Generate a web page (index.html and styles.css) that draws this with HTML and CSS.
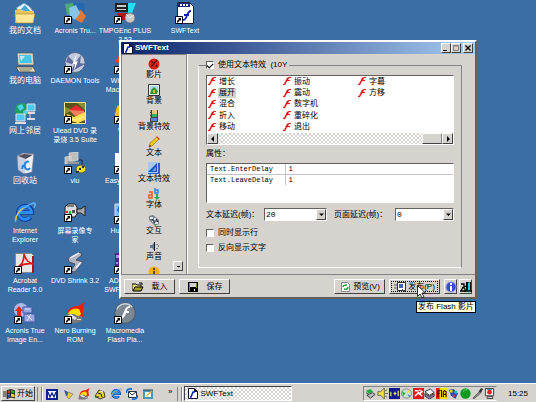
FILE: index.html
```html
<!DOCTYPE html>
<html lang="zh-CN">
<head>
<meta charset="UTF-8">
<meta name="viewport" content="width=device-width, initial-scale=1.0">
<title>SWFText</title>
<link rel="stylesheet" href="styles.css">
</head>
<body>
<!-- 公用图形 -->
<svg class="defs" aria-hidden="true">
  <symbol id="shortcut" viewBox="0 0 8 8"><path fill="#fff" stroke="#000" d="M.5.5h7v7h-7z"/><path d="M3 2h3v3L5 4 3 6.5H2V5l2-2z"/></symbol>
  <symbol id="flash" viewBox="0 0 8 9"><path d="M8 0v1H6L5 3h2v1H4L2 8H0V7h1l3-6 2-1z" fill="#e00000" stroke="#e66" stroke-width=".3"/></symbol>
  <symbol id="doc" viewBox="0 0 10 11"><path fill="#fff" stroke="#112" d="M.5.5h6l3 3v7h-9z"/><path fill="#112" d="M6 0l4 4H6z"/><path d="M2 9h1l2-5h2" fill="none" stroke="#1020c0" stroke-width="1.6"/></symbol>
  <symbol id="ie" viewBox="0 0 22 22"><path d="M16.500 15a6.800 6.800 0 1 1 1.500-4.500H6" fill="none" stroke="#0b3f9e" stroke-width="4.500"/><path d="M16 15a6.500 6.500 0 1 1 1.500-4.500H6" fill="none" stroke="#2c8cf0" stroke-width="2.800"/><path d="M2 20C-1 15 9 4 20 1c2 0 1 3 0 5" fill="none" stroke="#5cb4ff" stroke-width="1.500"/><path d="M2 18c0-5 3-9 7-12" fill="none" stroke="#e8c040" stroke-width="1.200"/></symbol>
  <symbol id="nero" viewBox="0 0 22 22"><path d="M3 12C4 5 10 4 14 4l7-4-2 6 1 8-6 3H3z" fill="#e82010"/><path d="M4 12c2-5 6-6 11-5l2 5-3 3H4z" fill="#ffe000"/><path d="M2 13q6-3 12 1h4v5l-5 2H1z" fill="#777"/><path d="M3 14l4-2 6 4-2 2zM13 17h4v1h-4z" fill="#ddd"/></symbol>
</svg>

<main class="desktop">
  <div class="icons">
    <a href="#" class="icon cjk">
      <svg viewBox="0 0 22 22"><path d="M2 6l8-5 5 3 5 6-8 5z" fill="#e8f4ff" stroke="#5a8fb8"/><path d="M6 8l5-5 6 7z" fill="#46a8d8"/><path d="M1 8l5-1 2 2h12v10l-2 2H1z" fill="#e8c458"/><path d="M1 12h20l-2 9H2z" fill="#fbe795" stroke="#a88828" stroke-width=".6"/></svg>
      <span>我的文档</span>
    </a>
    <a href="#" class="icon cjk">
      <svg viewBox="0 0 22 22"><path d="M3 1h16l1 12H4z" fill="#d8d4c4" stroke="#555" stroke-width=".7"/><path d="M5 3h12l1 8H6z" fill="#48c4f0"/><path d="M6 4h5l-4 5z" fill="#bff0ff"/><path d="M2 15h17l3 5H5z" fill="#e0d8c0" stroke="#443" stroke-width=".7"/><path d="M5 17h13M6 19h10" stroke="#776"/></svg>
      <span>我的电脑</span>
    </a>
    <a href="#" class="icon cjk">
      <svg viewBox="0 0 22 22"><circle cx="8" cy="8" r="7" fill="#18a060"/><path d="M3 4l5-2 2 4-4 3zM9 9l5-2v4l-4 3z" fill="#50d0e8"/><path d="M13 2h8v7h-8zM2 12h9v7H2z" fill="#50c8f8" stroke="#ddd"/><path d="M14 10h7v2h-7zM13 16h8v2h-8zM1 20h11v2H1z" fill="#ddd"/><path d="M16 12v4" stroke="#ddd"/></svg>
      <span>网上邻居</span>
    </a>
    <a href="#" class="icon cjk">
      <svg viewBox="0 0 22 22"><path d="M3 4l6-3 11 1-2 18-8 2-6-4z" fill="#c9cfe0" stroke="#778" stroke-width=".7"/><path d="M4 4l6-2 9 1-7 4z" fill="#554c5c"/><path d="M12 7l7-4-2 17-6 1z" fill="#f0f2ff"/><path d="M15 10a3 4 0 1 0 1 6M9 13l-1 4" fill="none" stroke="#2484e0" stroke-width="2"/></svg>
      <span>回收站</span>
    </a>
    <a href="#" class="icon">
      <svg viewBox="0 0 22 22"><use href="#ie"/></svg>
      <span>Internet<br>Explorer</span>
    </a>
    <a href="#" class="icon">
      <svg viewBox="0 0 22 22"><path fill="#e6e6e6" stroke="#888" d="M1.500 1.500h16l2 2v17h-18z"/><path d="M18 4h2v17h-2z" fill="#b81010"/><path d="M4 15c4-2 6-7 6-13 2 7 5 9 10 10-6-1-11 0-16 3z" fill="none" stroke="#d81818" stroke-width="1.600"/><use href="#shortcut" y="14" width="8" height="8"/></svg>
      <span>Acrobat<br>Reader 5.0</span>
    </a>
    <a href="#" class="icon">
      <svg viewBox="0 0 22 22"><circle cx="7" cy="8" r="7" fill="#a8b8e8"/><path d="M9 5h9v6H9zM10 12h11v8H10z" fill="#96a4e0" stroke="#445aa8"/><path d="M13 13l5 5M17 12l-4 7M11 7h5" stroke="#dce4ff"/><path d="M3 14V9H1l4-5 4 5H7v5z" fill="#e02810"/><use href="#shortcut" y="14" width="8" height="8"/></svg>
      <span>Acronis True<br>Image En...</span>
    </a>

    <a href="#" class="icon">
      <svg viewBox="0 0 22 22"><path d="M1 2l8-1 3 4-2 8H3z" fill="#50a878"/><path d="M9 1h10l2 3v8l-9-1z" fill="#2468b0"/><path d="M11 10l6-2 5 6-4 7-6-3z" fill="#e07838"/><path d="M5 6l7-3 4 8-5 7-5-4z" fill="#88c4e8"/><use href="#shortcut" y="14" width="8" height="8"/></svg>
      <span>Acronis Tru...</span>
    </a>
    <a href="#" class="icon">
      <svg viewBox="0 0 22 22"><circle cx="11" cy="10.500" r="10" fill="#c2cade" stroke="#59658a"/><path d="M4 4l7 7 6-8-1 8 5 1-9 5-5 3 3-7-8-3z" fill="#5d6c9c"/><path d="M13 1l-2 9 3-1-4 10 1-7-3 1z" fill="#fff"/><use href="#shortcut" y="14" width="8" height="8"/></svg>
      <span>DAEMON Tools</span>
    </a>
    <a href="#" class="icon">
      <svg viewBox="0 0 22 22"><path fill="#55551a" stroke="#f4e890" d="M.5.5h21v21H.5z"/><path d="M1 5l8 3-8 4zM13 1h8v7z" fill="#8a9030"/><path d="M5 8l7-5 9 6-8 3z" fill="#e82c2c"/><path d="M5 8l15 1v3l-9 2z" fill="#f08060"/><path d="M3 12l7 3 11-5v8l-7 3-10-3z" fill="#ffe050"/><path d="M5 16l7 2 8-3" fill="none" stroke="#fff2a0"/><use href="#shortcut" y="14" width="8" height="8"/></svg>
      <span>Ulead DVD 录<br>录烧 3.5 Suite</span>
    </a>
    <a href="#" class="icon">
      <svg viewBox="0 0 22 22"><path d="M5 1l9-1v8l-8 2zM1 5l6-1v7l-6 1z" fill="#bcbcbc" stroke="#eee" stroke-width=".6"/><path d="M4 9l11 1v2L3 12z" fill="#999"/><path d="M15 8h3v5" fill="none" stroke="#223"/><ellipse cx="17" cy="17" rx="5" ry="4" fill="#e8e020" stroke="#554"/><path d="M15 16h2v2h-2zM18 14h2v2h-2zM12 19h3v2h-3z" fill="#333"/><use href="#shortcut" y="14" width="8" height="8"/></svg>
      <span>viu</span>
    </a>
    <a href="#" class="icon">
      <svg viewBox="0 0 22 22"><path d="M1 5l3-3h7l2 3v7l-2 3H1z" fill="#ddd" stroke="#222"/><path d="M3 4h7M13 7h4l4-3v10l-4-3h-4z" fill="#aaa" stroke="#222"/><path d="M2 9h2v2H2z" fill="#e02020"/><path d="M5 9h2v3H5z" fill="#10b040"/><path d="M8 8h3v3H8z" fill="#555"/><use href="#shortcut" y="12" width="8" height="8"/></svg>
      <span>屏幕录像专<br>家</span>
    </a>
    <a href="#" class="icon">
      <svg viewBox="0 0 22 22"><path d="M4 6l12-6 2 3-6 5 7 2-8 10-4-1 4-7-6-2z" fill="#aeb4c4" stroke="#4a5060"/><path d="M6 6l9-5M12 16l5-6" stroke="#eef" stroke-width="1.500"/><use href="#shortcut" y="14" width="8" height="8"/></svg>
      <span>DVD Shrink 3.2</span>
    </a>
    <a href="#" class="icon">
      <svg viewBox="0 0 22 22"><use href="#nero"/><use href="#shortcut" y="14" width="8" height="8"/></svg>
      <span>Nero Burning<br>ROM</span>
    </a>

    <a href="#" class="icon">
      <svg viewBox="0 0 22 22"><path d="M12 1h10l-4 10h-4z" fill="#20e0f0"/><path d="M1 1h13v9H1z" fill="#222"/><path d="M3 3h9v2H3zM3 7h9v1H3z" fill="#ccc"/><path d="M3 11h10v7H5z" fill="#b01818"/><circle cx="16" cy="16" r="5" fill="#c8c8c8" stroke="#666" stroke-width=".7"/><path d="M12 12l4 4 4-3" stroke="#eee" fill="none"/><use href="#shortcut" y="14" width="8" height="8"/></svg>
      <span>TMPGEnc PLUS<br>2.53</span>
    </a>
    <a href="#" class="icon">
      <svg viewBox="0 0 22 22"><path d="M1 10l4-7 6-1v10z" fill="#e84818"/><path d="M11 3h9v16h-9z" fill="#3878d8"/><use href="#shortcut" y="14" width="8" height="8"/></svg>
      <span>Windows<br>Macromedia</span>
    </a>
    <a href="#" class="icon">
      <svg viewBox="0 0 22 22"><path d="M3 4l6-2 10 5v13H1v-8z" fill="#f0bc28"/><use href="#shortcut" y="14" width="8" height="8"/></svg>
      <span>Wi...</span>
    </a>
    <a href="#" class="icon tucked">
      <svg viewBox="0 0 22 22"><path d="M1 1h20v20H1z" fill="#fff"/><use href="#shortcut" y="14" width="8" height="8"/></svg>
      <span>Easy</span>
    </a>
    <a href="#" class="icon">
      <svg viewBox="0 0 22 22"><path d="M1 2h20v18H1z" fill="#80c0f0" stroke="#dde"/><path d="M3 8l2-4 3 12z" fill="#2868b8"/><use href="#shortcut" y="14" width="8" height="8"/></svg>
      <span>HuaYuan</span>
    </a>
    <a href="#" class="icon">
      <svg viewBox="0 0 22 22"><path d="M1 1h20v20H1z" fill="#50248c"/><path d="M2 3h3v3H2zM2 10h2v2H2z" fill="#b090e0"/><use href="#shortcut" y="14" width="8" height="8"/></svg>
      <span>ADShareit<br>SWF Toolbox</span>
    </a>
    <a href="#" class="icon">
      <svg viewBox="0 0 22 22"><circle cx="11" cy="11" r="10.300" fill="#7c8794" stroke="#4c5866"/><path d="M3 7a9 9 0 0 1 15-2" fill="none" stroke="#c8d0d8" stroke-width="1.500"/><path d="M16 4v2c-3 0-3 2-3 3h2v2h-3c-1 4-3 6-6 6v-2c5-1 3-11 10-11z" fill="#fff"/><use href="#shortcut" y="14" width="8" height="8"/></svg>
      <span>Macromedia<br>Flash Pla...</span>
    </a>

    <a href="#" class="icon">
      <svg viewBox="0 0 22 22"><path fill="#fff" stroke="#202030" d="M3.500.5h12l4 4v17h-16z"/><path d="M4 1h12v4H4z" fill="#182878"/><path d="M6 2h2v2H6zM9 2h2v2H9zM12 2h2v2h-2z" fill="#fff"/><path d="M17 9c-5 0-3 9-8 9M10 13h5" fill="none" stroke="#1020b8" stroke-width="1.800"/><use href="#shortcut" x="1" y="14" width="8" height="8"/></svg>
      <span>SWFText</span>
    </a>
  </div>

  <section class="window">
    <header class="titlebar">
      <svg class="app-icon" viewBox="0 0 10 11"><use href="#doc"/></svg>
      <h1>SWFText</h1>
      <button class="caption" aria-label="最小化"><svg viewBox="0 0 8 8"><path d="M1 6h4v1H1z"/></svg></button>
      <button class="caption" aria-label="最大化"><svg viewBox="0 0 8 8"><path d="M1.500 1.500h5v5h-5zM1 2h6" fill="none" stroke="#848284"/></svg></button>
      <button class="caption close" aria-label="关闭"><svg viewBox="0 0 8 8"><path d="M1.500 1.500l5 5M6.500 1.500l-5 5" stroke="#000" stroke-width="1.300"/></svg></button>
    </header>

    <div class="body">
      <nav class="sidebar">
        <a href="#"><svg viewBox="0 0 12 12"><circle cx="6" cy="6" r="5.500" fill="#d82018"/><path d="M3 3l2 2M9 2L3 9M8 7l1 2" stroke="#611" stroke-width="1.500"/></svg>影片</a>
        <a href="#"><svg viewBox="0 0 12 12"><path d="M.5.5h11v11H.5z" fill="#e8f4e8" stroke="#334"/><path d="M2 2h8v4H2z" fill="#a8d8f0"/><path d="M2 10l1-4 3-3 4 4-1 3z" fill="#3c9028"/><path d="M5 6h2v3H5z" fill="#e8c020"/></svg>背景</a>
        <a href="#"><svg viewBox="0 0 12 12"><path d="M2 0h8v12H2z" fill="#444"/><path d="M4 0h5v4H4z" fill="#f0c080"/><path d="M4 4h5v3H4z" fill="#30b060"/><path d="M3 8h6v3H3z" fill="#6080e0"/><path d="M2 1h1M2 4h1M2 7h1" stroke="#fff"/></svg>背景特效</a>
        <a href="#"><svg viewBox="0 0 12 12"><path d="M1 11l1-4 7-6 2 2-7 7z" fill="#f8c818" stroke="#a07008" stroke-width=".7"/><path d="M8 1l1-1 3 3-1 1z" fill="#e05030"/><path d="M1 11l1-2 1 1z"/></svg>文本</a>
        <a href="#"><svg viewBox="0 0 12 12"><path d="M0 0h12v12H0z" fill="#a8c8f0"/><path d="M0 10l9-9v9z" fill="#2050b8"/><path d="M10 1h2v11H0v-1h10z" fill="#3060c0"/><path d="M4 9l4-4v4z" fill="#70a0e8"/></svg>文本特效</a>
        <a href="#"><svg viewBox="0 0 12 12"><path d="M1 4h3v6H1V7h3" fill="none" stroke="#f06030" stroke-width="1.600"/><path d="M7 0v5h3V2H7" fill="none" stroke="#3080e0" stroke-width="1.400"/><path d="M8 6h2v3h2l-3 3-3-3h2z" fill="#30a848"/></svg>字体</a>
        <a href="#"><svg viewBox="0 0 12 12"><path d="M1 2l4-1 6 5v4l-4 2-6-6z" fill="#758090"/><path d="M2 3h3v2H2zM6 4h2v2H6zM7 8h3v2H7zM4 7h2v1H4z" fill="#e0e8f0"/><path d="M4 5l3 4M8 5l2 3" stroke="#222"/></svg>交互</a>
        <a href="#"><svg viewBox="0 0 12 12"><path d="M2 5h2l3-3v9L4 8H2z" fill="#607890"/><path d="M6 2h1v9H6z" fill="#112"/><path d="M9 4v1M9 8v1M10 6h1" stroke="#345"/></svg>声音</a>
        <a href="#" aria-label="关于"><svg viewBox="0 0 12 12"><circle cx="6" cy="6" r="5.500" fill="#f0b018"/><path d="M5 2h2v2H5zM5 5h2v5H5z" fill="#644"/></svg></a>
        <button class="scroll-down" aria-label="向下"><svg viewBox="0 0 8 8"><path d="M3 4h3v1H3z"/></svg></button>
      </nav>

      <div class="main">
        <fieldset class="group">
          <legend><label class="check"><input type="checkbox" checked>使用文本特效&nbsp; (10Y</label></legend>

          <div class="list">
            <ul class="effects">
              <li><svg viewBox="0 0 8 9"><use href="#flash"/></svg><span>增长</span></li>
              <li><svg viewBox="0 0 8 9"><use href="#flash"/></svg><span class="selected">展开</span></li>
              <li><svg viewBox="0 0 8 9"><use href="#flash"/></svg><span>混合</span></li>
              <li><svg viewBox="0 0 8 9"><use href="#flash"/></svg><span>折入</span></li>
              <li><svg viewBox="0 0 8 9"><use href="#flash"/></svg><span>移动</span></li>
              <li><svg viewBox="0 0 8 9"><use href="#flash"/></svg><span>振动</span></li>
              <li><svg viewBox="0 0 8 9"><use href="#flash"/></svg><span>震动</span></li>
              <li><svg viewBox="0 0 8 9"><use href="#flash"/></svg><span>数字机</span></li>
              <li><svg viewBox="0 0 8 9"><use href="#flash"/></svg><span>重碎化</span></li>
              <li><svg viewBox="0 0 8 9"><use href="#flash"/></svg><span>退出</span></li>
              <li><svg viewBox="0 0 8 9"><use href="#flash"/></svg><span>字幕</span></li>
              <li><svg viewBox="0 0 8 9"><use href="#flash"/></svg><span>方移</span></li>
            </ul>
            <div class="scrollbar">
              <button aria-label="向左"><svg viewBox="0 0 8 8"><path d="M5 1v6L2 4z"/></svg></button>
              <span class="thumb"></span>
              <button aria-label="向右"><svg viewBox="0 0 8 8"><path d="M3 1v6l3-3z"/></svg></button>
            </div>
          </div>

          <p class="caption-text">属性：</p>
          <div class="props">
            <table>
              <tr><th>Text.EnterDelay</th><td>1</td></tr>
              <tr><th>Text.LeaveDelay</th><td>1</td></tr>
            </table>
          </div>

          <div class="delays">
            <label for="text-delay">文本延迟(帧)：</label>
            <span class="combo text-combo"><select id="text-delay"><option>20</option></select><svg viewBox="0 0 8 8"><path d="M2 3h5L4.500 5.500z"/></svg></span>
            <label for="page-delay" class="second">页面延迟(帧)：</label>
            <span class="combo page-combo"><select id="page-delay"><option>0</option></select><svg viewBox="0 0 8 8"><path d="M2 3h5L4.500 5.500z"/></svg></span>
          </div>
          <div class="checks">
            <label class="check"><input type="checkbox">同时显示行</label>
            <label class="check"><input type="checkbox">反向显示文字</label>
          </div>
        </fieldset>
      </div>
    </div>

    <footer class="actions">
      <button><svg viewBox="0 0 12 10"><path d="M0 9V2h4l1 1h4v2" fill="#f0e880" stroke="#000"/><path d="M1 9l2-4h8L9 9z" fill="#a8a020" stroke="#000"/><path d="M7 1h3v2" fill="none" stroke="#000"/></svg><span>载入</span></button>
      <button><svg viewBox="0 0 12 10"><path d="M1 0h10v10H1z"/><path d="M3 1h6v4H3z" fill="#d6d3ce"/><path d="M2 1h1v8H2zM9 1h1v5H9z" fill="#808020"/><path d="M7 7h1v2H7z" fill="#fff"/></svg><span>保存</span></button>
      <button class="push compact"><svg viewBox="0 0 12 10"><path fill="#fff" stroke="#888" d="M2.500.5h6l2 2v7h-8z"/><path d="M4 5q0-2 4-2M9 5q0 3-4 2" fill="none" stroke="#28a038" stroke-width="1.500"/></svg><span>预览(V)</span></button>
      <button class="compact focused"><svg viewBox="0 0 12 10"><path fill="#fff" stroke="#333" d="M3.500.5h8v8h-8z"/><path d="M5 2h4v4H5z" fill="#4060c0"/><path d="M0 3h3M0 6h3M8 7l3 3" stroke="#555"/></svg><span>发布(P)</span></button>
      <button class="square" aria-label="帮助"><svg viewBox="0 0 12 12"><circle cx="6" cy="6" r="5" fill="#3848d8" stroke="#9098e0"/><path d="M5 2h2v2H5zM5 5h2v5H5z" fill="#fff"/></svg></button>
      <button class="square" aria-label="退出"><svg viewBox="0 0 12 12"><path d="M6 1h5v9H6z"/><path d="M8 2l2-1v9l-2 2z" fill="#00d8e8"/><path d="M1 3h3v3l2-1M3 6l2 2v3M3 6l-2 4M0 10h12" stroke="#000" fill="none" stroke-width="1.300"/></svg></button>
    </footer>
  </section>

  <div class="tooltip">发布 Flash 影片</div>
  <svg class="cursor" viewBox="0 0 9 14"><path d="M.5.5v11L3 9l2 4 2-1-2-4h3.500z" fill="#fff" stroke="#000" stroke-width=".8"/></svg>
</main>

<footer class="taskbar">
  <button class="start"><svg viewBox="0 0 12 10"><path d="M4 2l3-1v3L4 5z" fill="#e83020"/><path d="M8 1l4 1v3L8 4z" fill="#28a838"/><path d="M4 6l3-1v3L4 9z" fill="#2848d8"/><path d="M8 5l4 1v3L8 8z" fill="#f0d020"/><path d="M0 3h3M0 5h3M0 7h3M4 1.500l4-1 4 1.500v7L8 8 4 9.500zM7.500 1v7M4 5l4-1 4 1" fill="none" stroke="#000" stroke-width=".8"/></svg><span>开始</span></button>
  <span class="grip"></span>
  <nav class="quick">
    <a href="#" aria-label="Word"><svg viewBox="0 0 12 12"><path d="M0 1h12v11H0z" fill="#102090"/><path d="M2 3h8v7H2z" fill="#fff"/><path d="M2 4l2 5 2-4 2 4 2-5" fill="none" stroke="#102090" stroke-width="1.300"/></svg></a>
    <a href="#" aria-label="清理"><svg viewBox="0 0 12 12"><path d="M2 2l4 2 1 3-3 1z" fill="#3858a0"/><path d="M6 4l5 2-4 5-2-2z" fill="#e8d030" stroke="#665" stroke-width=".6"/></svg></a>
    <a href="#" aria-label="Nero"><svg viewBox="0 0 22 22"><use href="#nero"/></svg></a>
    <a href="#" aria-label="播放器"><svg viewBox="0 0 12 12"><path d="M1 8l4-6 5 2 1 5-5 2z" fill="#e0cc30" stroke="#443"/><path d="M4 5l3 1 1 3M1 9h4" stroke="#222" fill="none"/><path d="M6 3l3 1" stroke="#fff"/></svg></a>
    <a href="#" aria-label="Internet Explorer"><svg viewBox="0 0 22 22"><use href="#ie"/></svg></a>
    <a href="#" aria-label="Outlook Express"><svg viewBox="0 0 12 12"><path fill="#fff" stroke="#234" d="M2.500 3.500h8v6h-8z"/><path d="M3 4l3 3 4-3" stroke="#234" fill="none"/><path d="M0 5q1-5 6-4M12 7q-1 5-6 4" fill="none" stroke="#2070e0" stroke-width="1.800"/></svg></a>
    <a href="#" aria-label="显示桌面"><svg viewBox="0 0 12 12"><path d="M1 2h10v9H1z" fill="#4898b8"/><path d="M3 4h6v5H3z" fill="#fff"/><path d="M4 8l6-7 1 1-6 7z" fill="#e0b030"/><path d="M1 2h10" stroke="#345"/></svg></a>
  </nav>
  <span class="more">»</span>
  <span class="grip"></span>
  <button class="task"><svg viewBox="0 0 10 11"><use href="#doc"/></svg><span>SWFText</span></button>
  <div class="tray">
    <svg viewBox="0 0 12 12"><path d="M1 3l5-2 3 3-5 2z" fill="#20b040"/><path d="M2 8l6-3 3 2-5 4z" fill="#bbb" stroke="#333"/><path d="M1 5l3 2" stroke="#333"/></svg>
    <svg viewBox="0 0 12 12"><path d="M1 4h3l4-4v12L4 8H1z" fill="#f0e040" stroke="#443" stroke-width=".8"/><path d="M9 3l2-1M9 6h3M9 9l2 1" stroke="#555"/></svg>
    <svg viewBox="0 0 12 12"><path d="M0 0h12v12H0z" fill="#101890"/><path d="M2 4v5M5 6h3M6.500 4v4M10 3v6" stroke="#e8f060" stroke-width="1.300"/></svg>
    <svg viewBox="0 0 12 12"><ellipse cx="6" cy="6" rx="5.500" ry="5" fill="#c0e8d0" stroke="#888"/><path d="M1 3l4 3-3 3z" fill="#30b048"/><path d="M7 1l3 3-4 2z" fill="#f0e040"/><path d="M7 7l4 1-2 2z" fill="#6078e0"/></svg>
    <svg viewBox="0 0 12 12"><path d="M0 0h12v12H0z" fill="#e01818"/><path d="M2 3h4M2 9l4-4 4 4M7 2l3 2-4 3" fill="none" stroke="#fff" stroke-width="1.500"/></svg>
    <svg viewBox="0 0 12 12"><path d="M1 4l6-3 4 4-5 3z" fill="#eee" stroke="#333"/><path d="M1 6l5 3 5-3v3l-5 3-5-3z" fill="#8878a8" stroke="#333"/></svg>
    <svg viewBox="0 0 12 12"><path d="M0 0h12v12H0z" fill="#ffe800"/><path d="M0 0h4v12H0z" fill="#e82010"/><path d="M2 10V3h3M2 6h2M6 2v8M8 10V4l1-1 2 1v6M8 7h3" fill="none" stroke="#300" stroke-width="1.200"/></svg>
    <svg viewBox="0 0 12 12"><path d="M1 2l5-1 5 5-3 6-5-4z" fill="#2850b0"/><path d="M2 2h3v3H2z" fill="#e8c020"/><path d="M7 3h3v3H7z" fill="#30b8d0"/><path d="M5 7h3v3H5z" fill="#c03060"/></svg>
    <svg viewBox="0 0 12 12"><circle cx="6" cy="6" r="5.600" fill="#109820"/><path d="M3 4q2-3 5-2" stroke="#60e060" fill="none"/></svg>
    <svg viewBox="0 0 12 12"><path d="M1 11l7-7 2 1-8 7z" fill="#888" stroke="#333" stroke-width=".6"/><path d="M7 4l3-4 2 1-2 4z" fill="#333"/></svg>
    <svg viewBox="0 0 12 12"><path fill="#f4f4f4" stroke="#333" d="M1.500.5h9v8h-9zM3.500 9.500h6v2h-6z"/><circle cx="6" cy="4.500" r="2.500" fill="#e02020"/><path d="M3 1h6v1H3z" fill="#3080c0"/></svg>
  </div>
  <time class="clock">15:25</time>
</footer>
</body>
</html>
```
FILE: styles.css
```css
* {
  box-sizing: border-box;
}

body {
  margin: 0;
  min-height: 100vh;
  display: flex;
  flex-direction: column;
  overflow: hidden;
  background: #3a6ea5;
  color: #000;
  font: 8px/10px "Liberation Sans", "Noto Sans CJK SC", sans-serif;
  cursor: default;
}

a {
  color: inherit;
  text-decoration: none;
}

svg {
  display: block;
  flex: none;
}

button,
select,
input {
  margin: 0;
  font: inherit;
  color: inherit;
}

button {
  display: flex;
  align-items: center;
  justify-content: center;
  padding: 0;
  background: #d6d3ce;
  border: 1px solid;
  border-color: #fff #424142 #424142 #fff;
}

.defs {
  position: absolute;
  width: 0;
  height: 0;
}

/* 桌面图标 */
.desktop {
  position: relative;
  flex: 1;
}

.icons {
  display: grid;
  grid-template-columns: 50px 50px 50px 70px;
  grid-template-rows: repeat(7, 50px);
  grid-auto-flow: column;
  padding-top: 2px;
}

.icon {
  display: flex;
  flex-direction: column;
  align-items: center;
  gap: 2px;
  color: #fff;
  font-size: 7px;
  line-height: 9px;
  text-align: center;
  white-space: nowrap;
}

.icon svg {
  width: 22px;
  height: 22px;
}

.icon.cjk {
  font-size: 8px;
}

.icon.tucked span {
  align-self: flex-start;
  padding-left: 5px;
}

/* 主窗口 */
.window {
  position: absolute;
  top: 40px;
  left: 119px;
  right: 59px;
  background: #d6d3ce;
  border: 2px solid;
  border-color: #fff #63615e #63615e #fff;
}

.titlebar {
  display: flex;
  align-items: center;
  height: 12px;
  padding: 0 2px;
  background: linear-gradient(to right, #0a246a, #a6caf0);
  color: #fff;
}

.titlebar h1 {
  flex: 1;
  margin: 0 0 0 2px;
  font-size: 8px;
}

.app-icon {
  width: 10px;
  height: 11px;
}

.caption {
  width: 10px;
  height: 10px;
}

.caption svg {
  width: 8px;
  height: 8px;
}

.caption.close {
  margin-left: 2px;
}

.body {
  display: flex;
  height: 221px;
  border-bottom: 1px solid #848284;
}

.sidebar {
  position: relative;
  width: 66px;
  padding-top: 3px;
  overflow: hidden;
  border: 1px solid #848284;
  border-bottom: 0;
  box-shadow: 1px 0 #fff;
}

.sidebar a {
  display: flex;
  flex-direction: column;
  align-items: center;
  height: 26px;
  line-height: 10px;
}

.sidebar svg {
  width: 12px;
  height: 12px;
}

.scroll-down {
  position: absolute;
  right: 3px;
  bottom: 3px;
  width: 10px;
  height: 10px;
}

.scroll-down svg {
  width: 8px;
  height: 8px;
}

.main {
  flex: 1;
  padding: 6px 13px 6px 11px;
}

.group {
  min-width: 0;
  height: 100%;
  margin: 0;
  padding: 5px 7px 0;
  border: 1px solid;
  border-color: #848284 #848284 #fff #fff;
}

.group legend {
  padding: 0 2px 0 0;
}

.check {
  display: flex;
  align-items: center;
  gap: 4px;
}

.check input {
  appearance: none;
  display: grid;
  justify-content: center;
  width: 8px;
  height: 8px;
  background: #fff;
  border: 1px solid;
  border-color: #63615e #fff #fff #63615e;
}

.check input:checked::after {
  content: "";
  width: 5px;
  height: 3px;
  margin-top: 1px;
  border: solid #000;
  border-width: 0 0 1px 1px;
  transform: rotate(-45deg);
}

/* 特效列表 */
.list {
  background: #fff;
  border: 1px solid;
  border-color: #63615e #fff #fff #63615e;
}

.effects {
  display: grid;
  grid-template-columns: repeat(3, 75px);
  grid-template-rows: repeat(5, 1fr);
  grid-auto-flow: column;
  height: 57px;
  margin: 0;
  padding: 0;
  list-style: none;
}

.effects li {
  display: flex;
  align-items: center;
  gap: 2px;
  padding-left: 1px;
}

.effects svg {
  width: 8px;
  height: 9px;
}

.effects span {
  padding: 0 1px;
}

.effects .selected {
  background: #d6d3ce;
}

.scrollbar {
  display: flex;
  height: 11px;
  background: repeating-conic-gradient(#d6d3ce 0 25%, #fff 0 50%) 0 0 / 4px 4px;
}

.scrollbar button {
  width: 11px;
}

.scrollbar svg {
  width: 8px;
  height: 8px;
}

.thumb {
  width: 20px;
  margin-left: auto;
  background: #d6d3ce;
  border: 1px solid;
  border-color: #fff #848284 #424142 #fff;
}

.caption-text {
  margin: 4px 0 4px;
}

/* 属性表 */
.props {
  height: 40px;
  background: #fff;
  border: 1px solid;
  border-color: #63615e #fff #fff #63615e;
}

.props table {
  width: 100%;
  border-collapse: collapse;
  table-layout: fixed;
  font: 7px/10px "Liberation Mono", monospace;
}

.props th,
.props td {
  padding: 0 0 0 3px;
  font-weight: normal;
  text-align: left;
}

.props th {
  width: 78px;
  border-right: 1px solid #c6c3c6;
}

.props tr:first-child {
  border-bottom: 1px solid #c6c3c6;
}

/* 延迟设置 */
.delays {
  display: flex;
  align-items: center;
  margin-top: 5px;
  white-space: nowrap;
}

.delays label {
  width: 58px;
}

.delays .second {
  margin-left: 7px;
  width: 61px;
}

.combo {
  display: flex;
  height: 13px;
  background: #fff;
  border: 1px solid;
  border-color: #63615e #fff #fff #63615e;
}

.text-combo {
  flex: 63;
}

.page-combo {
  flex: 59;
}

.combo select {
  flex: 1;
  min-width: 0;
  padding: 0 1px;
  appearance: none;
  background: none;
  border: 0;
  font: 8px/8px "Liberation Mono", monospace;
}

.combo svg {
  width: 10px;
  height: 11px;
  background: #d6d3ce;
  border: 1px solid;
  border-color: #fff #424142 #424142 #fff;
  pointer-events: none;
}

.checks {
  display: flex;
  flex-direction: column;
  gap: 5px;
  margin-top: 7px;
}

/* 底部按钮 */
.actions {
  display: flex;
  height: 22px;
  gap: 4px;
  padding: 4px 3px 3px;
}

.actions button {
  width: 51px;
  height: 15px;
  gap: 8px;
}

.actions svg {
  width: 12px;
  height: 10px;
}

.actions .compact {
  gap: 2px;
}

.actions .push {
  margin-left: auto;
}

.actions .focused {
  outline: 1px dotted #000;
  outline-offset: -3px;
}

.actions .square {
  width: 13px;
}

.actions .square + .square {
  margin-left: -2px;
}

.actions .square svg {
  height: 12px;
}

.tooltip {
  position: absolute;
  top: 301px;
  left: 416px;
  padding: 0 1px;
  background: #ffffe1;
  border: 1px solid #000;
  white-space: nowrap;
}

.cursor {
  position: absolute;
  top: 285px;
  left: 417px;
  width: 9px;
  height: 14px;
}

/* 任务栏 */
.taskbar {
  display: flex;
  align-items: center;
  height: 19px;
  padding: 2px 2px 1px 1px;
  background: #d6d3ce;
  border-top: 1px solid #fff;
}

.start {
  width: 34px;
  height: 15px;
  gap: 2px;
}

.start svg {
  width: 12px;
  height: 10px;
}

.grip {
  width: 5px;
  height: 14px;
  margin-left: 2px;
  border: solid #848284;
  border-width: 0 1px;
  box-shadow: 1px 0 #fff;
}

.quick {
  display: flex;
  gap: 4px;
  margin-left: 4px;
}

.quick svg {
  width: 12px;
  height: 12px;
}

.more {
  margin: 0 3px 4px 14px;
}

.task {
  justify-content: flex-start;
  width: 108px;
  height: 15px;
  margin-left: 2px;
  padding-left: 3px;
  gap: 2px;
  background: repeating-conic-gradient(#d6d3ce 0 25%, #fff 0 50%) 0 0 / 4px 4px;
  border-color: #424142 #fff #fff #424142;
}

.task svg {
  width: 10px;
  height: 11px;
}

.tray {
  display: flex;
  align-items: center;
  justify-content: space-between;
  width: 134px;
  height: 15px;
  margin-left: auto;
  padding: 0 1px;
  border: 1px solid;
  border-color: #848284 #d6d3ce #fff #848284;
}

.tray svg {
  width: 11px;
  height: 11px;
}

.clock {
  width: 37px;
  padding-left: 11px;
}
```
